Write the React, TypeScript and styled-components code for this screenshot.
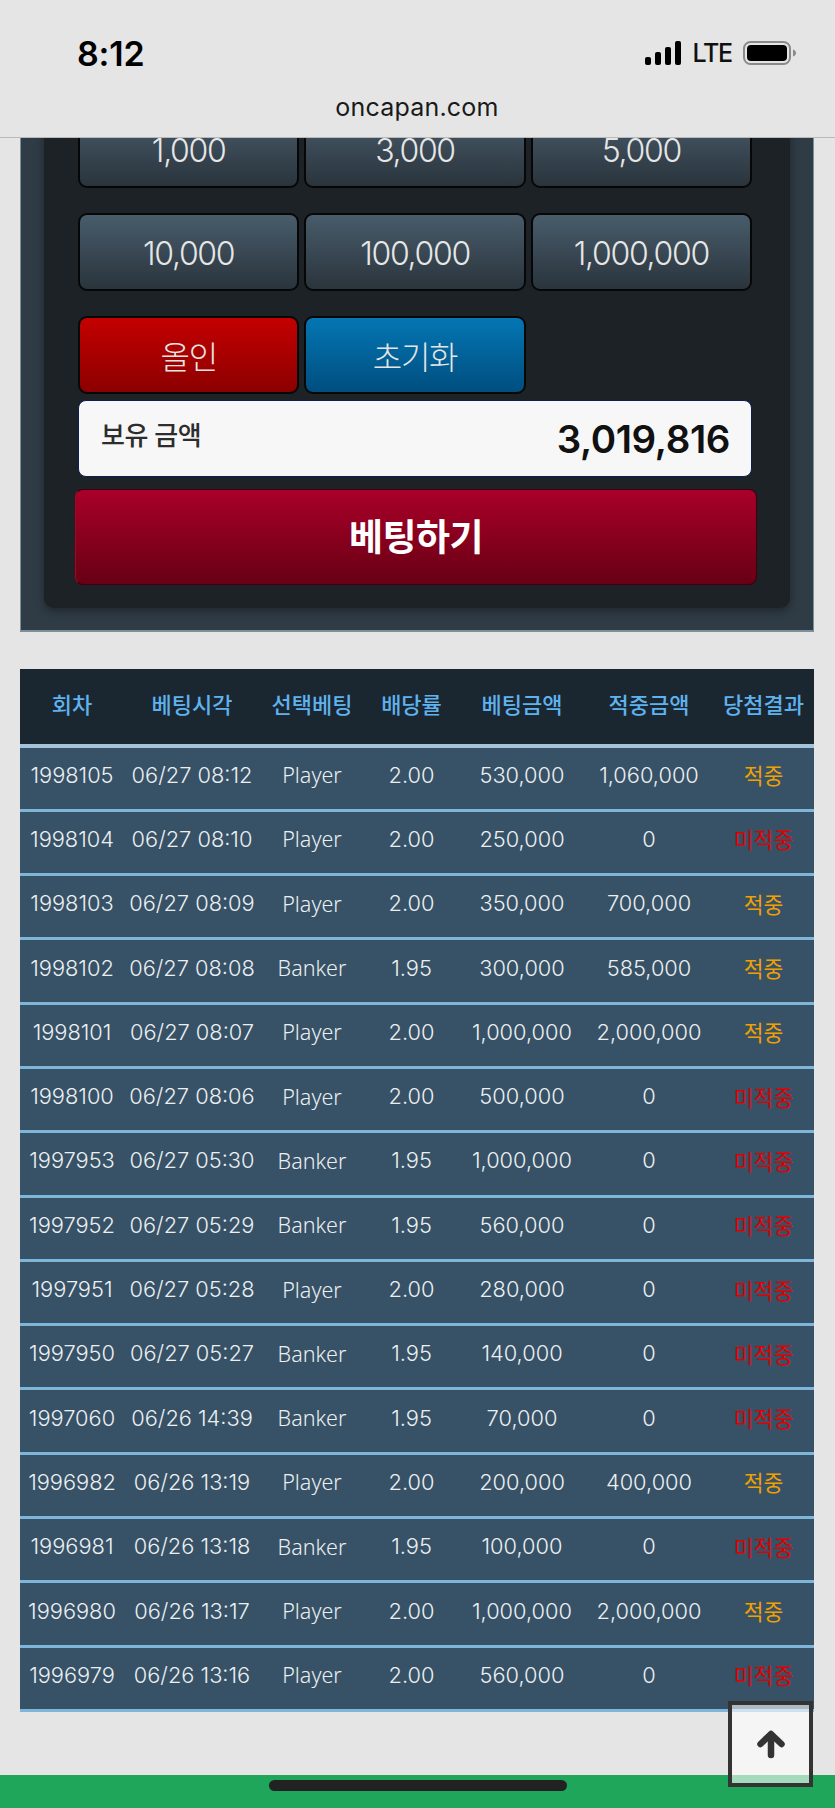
import styled, { createGlobalStyle } from 'styled-components';

const GlobalStyle = createGlobalStyle`
  html, body {
    margin: 0;
    padding: 0;
    background: #e5e5e5;
  }
  * { box-sizing: border-box; }
`;

type BetRow = {
  round: string;
  time: string;
  pick: string;
  odds: string;
  amount: string;
  payout: string;
  win: boolean;
};

const row = (round: string, time: string, pick: string, amount: string, payout: string): BetRow => ({
  round,
  time,
  pick,
  odds: pick === 'Player' ? '2.00' : '1.95',
  amount,
  payout,
  win: payout !== '0',
});

const rows: BetRow[] = [
  row('1998105', '06/27 08:12', 'Player', '530,000', '1,060,000'),
  row('1998104', '06/27 08:10', 'Player', '250,000', '0'),
  row('1998103', '06/27 08:09', 'Player', '350,000', '700,000'),
  row('1998102', '06/27 08:08', 'Banker', '300,000', '585,000'),
  row('1998101', '06/27 08:07', 'Player', '1,000,000', '2,000,000'),
  row('1998100', '06/27 08:06', 'Player', '500,000', '0'),
  row('1997953', '06/27 05:30', 'Banker', '1,000,000', '0'),
  row('1997952', '06/27 05:29', 'Banker', '560,000', '0'),
  row('1997951', '06/27 05:28', 'Player', '280,000', '0'),
  row('1997950', '06/27 05:27', 'Banker', '140,000', '0'),
  row('1997060', '06/26 14:39', 'Banker', '70,000', '0'),
  row('1996982', '06/26 13:19', 'Player', '200,000', '400,000'),
  row('1996981', '06/26 13:18', 'Banker', '100,000', '0'),
  row('1996980', '06/26 13:17', 'Player', '1,000,000', '2,000,000'),
  row('1996979', '06/26 13:16', 'Player', '560,000', '0'),
];

const headers = ['회차', '베팅시각', '선택베팅', '배당률', '베팅금액', '적중금액', '당첨결과'];
const colWidths = [104, 136, 104, 95, 126, 128, 101];
const chips = ['1,000', '3,000', '5,000', '10,000', '100,000', '1,000,000'];

export default function App() {
  return (
    <>
      <GlobalStyle />
      <Page>
        <StatusArea>
          <StatusRow>
            <Clock>8:12</Clock>
            <StatusIcons>
              <svg width="36" height="24" viewBox="0 0 36 24" fill="#000">
                <rect x="0" y="16" width="6" height="8" rx="2" />
                <rect x="10" y="11" width="6" height="13" rx="2" />
                <rect x="20" y="6" width="6" height="18" rx="2" />
                <rect x="30" y="0" width="6" height="24" rx="2" />
              </svg>
              <Lte>LTE</Lte>
              <svg width="53" height="24" viewBox="0 0 53 24">
                <rect x="1" y="1" width="46" height="22" rx="6.5" fill="none" stroke="#8a8a8a" strokeWidth="2" />
                <rect x="4" y="4" width="40" height="16" rx="4" fill="#000" />
                <path d="M50 8.5c1.6.5 3 1.800 3 3.500s-1.400 3-3 3.500z" fill="#8a8a8a" />
              </svg>
            </StatusIcons>
          </StatusRow>
          <Domain>oncapan.com</Domain>
        </StatusArea>

        <Main>
          <OuterPanel>
            <InnerPanel>
              <ChipGrid>
                {chips.map((c) => (
                  <Chip key={c}>{c}</Chip>
                ))}
                <Chip $tone="red">올인</Chip>
                <Chip $tone="blue">초기화</Chip>
              </ChipGrid>
              <Balance>
                <BalanceLabel>보유 금액</BalanceLabel>
                <BalanceValue>3,019,816</BalanceValue>
              </Balance>
              <BetButton>베팅하기</BetButton>
            </InnerPanel>
          </OuterPanel>

          <HistoryTable>
            <colgroup>
              {colWidths.map((w, i) => (
                <col key={i} style={{ width: w }} />
              ))}
            </colgroup>
            <thead>
              <tr>
                {headers.map((h) => (
                  <HeadCell key={h}>{h}</HeadCell>
                ))}
              </tr>
            </thead>
            <tbody>
              {rows.map((r) => (
                <tr key={r.round}>
                  <Cell>{r.round}</Cell>
                  <Cell>{r.time}</Cell>
                  <PickCell>{r.pick}</PickCell>
                  <Cell>{r.odds}</Cell>
                  <Cell>{r.amount}</Cell>
                  <Cell>{r.payout}</Cell>
                  <ResultCell $win={r.win}>{r.win ? '적중' : '미적중'}</ResultCell>
                </tr>
              ))}
            </tbody>
          </HistoryTable>
        </Main>

        <BottomBar>
          <HomeIndicator />
        </BottomBar>

        <TopButton aria-label="top">
          <svg width="30" height="30" viewBox="0 0 30 30" fill="none" stroke="currentColor" strokeWidth="6.5" strokeLinecap="round" strokeLinejoin="round">
            <path d="M4.500 15L15 5l10.500 10" />
            <path d="M15 6v20" />
          </svg>
        </TopButton>
      </Page>
    </>
  );
}

const Page = styled.div`
  position: relative;
  width: 835px;
  height: 1808px;
  display: flex;
  flex-direction: column;
  overflow: hidden;
  background: #e5e5e5;
  font-family: Inter, 'Noto Sans CJK KR', sans-serif;
`;

const StatusArea = styled.header`
  height: 138px;
  flex: none;
  padding: 41px 39px 0 77px;
  border-bottom: 1px solid #b9b9b9;
  background: #e5e5e5;
`;

const StatusRow = styled.div`
  display: flex;
  align-items: center;
  justify-content: space-between;
  height: 24px;
`;

const Clock = styled.div`
  font-size: 34px;
  font-weight: 600;
  letter-spacing: -0.2px;
  color: #000;
`;

const StatusIcons = styled.div`
  display: flex;
  align-items: center;
  gap: 11px;
`;

const Lte = styled.span`
  font-size: 25px;
  font-weight: 500;
  letter-spacing: -1.2px;
  color: #111;
`;

const Domain = styled.div`
  margin: 27px 0 0 -39px;
  text-align: center;
  font-size: 25px;
  line-height: 30px;
  letter-spacing: 0.2px;
  color: #1a1a1a;
`;

const Main = styled.main`
  flex: 1;
  min-height: 0;
  overflow: hidden;
  padding: 0 21px 0 20px;
`;

const OuterPanel = styled.section`
  height: 522px;
  margin-top: -28px;
  padding: 0 23px 22px 23px;
  background: #2f3b45;
  border-right: 1px solid #7c8f9c;
  border-bottom: 2px solid #7c8f9c;
  border-left: 1px solid #7c8f9c;
`;

const InnerPanel = styled.div`
  height: 100%;
  padding: 0 38px 0 34px;
  background: #1c2226;
  border-radius: 0 0 10px 10px;
  box-shadow: 0 3px 8px rgba(0, 0, 0, 0.35);
`;

const ChipGrid = styled.div`
  display: grid;
  grid-template-columns: repeat(3, 1fr);
  gap: 25px 5px;
`;

const toneColors = {
  slate: 'linear-gradient(#485c6b, #2a343c)',
  red: 'linear-gradient(#c40000, #8c0000)',
  blue: 'linear-gradient(#0476b3, #004e7f)',
};

const Chip = styled.button<{ $tone?: keyof typeof toneColors }>`
  height: 78px;
  padding: ${(p) => (p.$tone ? '0' : '2px 0 0')};
  background: ${(p) => toneColors[p.$tone ?? 'slate']};
  border: 2px solid #070707;
  border-radius: 9px;
  color: #e6e6e6;
  font-family: Inter, 'Noto Sans CJK KR', sans-serif;
  font-size: 32px;
  font-weight: 300;
  letter-spacing: -1.3px;
`;

const Balance = styled.div`
  display: flex;
  justify-content: space-between;
  align-items: center;
  height: 77px;
  margin-top: 6px;
  padding: 0 21px 0 22px;
  background: #f7f7f7;
  border: 1px solid #0b1f55;
  border-radius: 8px;
`;

const BalanceLabel = styled.span`
  margin-top: -10px;
  font-size: 26px;
  font-weight: 500;
  letter-spacing: -0.5px;
  color: #2d2d2d;
`;

const BalanceValue = styled.span`
  font-size: 38.5px;
  font-weight: 600;
  letter-spacing: -0.4px;
  color: #111;
`;

const BetButton = styled.button`
  display: block;
  width: 682px;
  height: 96px;
  margin: 12px 0 0 -3px;
  padding: 0 0 4px;
  background: linear-gradient(#aa0029, #670014);
  border: 1px solid #3c0010;
  border-left-color: #b00020;
  border-radius: 8px;
  color: #fff;
  font-family: Inter, 'Noto Sans CJK KR', sans-serif;
  font-size: 37px;
  font-weight: 700;
  letter-spacing: -0.5px;
`;

const HistoryTable = styled.table`
  width: 794px;
  margin-top: 37px;
  border-collapse: collapse;
  table-layout: fixed;
`;

const HeadCell = styled.th`
  height: 77px;
  padding: 0 0 8px;
  background: #1a2630;
  border-bottom: 4px solid #a3c3da;
  color: #5fb2ee;
  font-family: 'Noto Sans CJK KR', sans-serif;
  font-size: 22px;
  font-weight: 500;
  text-align: center;
  white-space: nowrap;
`;

const Cell = styled.td`
  height: 64.3px;
  padding: 0 0 7px;
  background: #375267;
  border-bottom: 3px solid #7fb5d8;
  color: #eceff1;
  font-family: Inter, 'Noto Sans CJK KR', sans-serif;
  font-size: 21.8px;
  font-weight: 300;
  text-align: center;
  white-space: nowrap;
`;

const PickCell = styled(Cell)`
  font-family: 'Noto Sans', sans-serif;
  font-size: 21.5px;
  font-weight: 300;
`;

const ResultCell = styled(Cell)<{ $win: boolean }>`
  color: ${(p) => (p.$win ? '#f0a000' : '#e00000')};
  font-family: 'Noto Sans CJK KR', sans-serif;
  font-size: 21.5px;
  font-weight: 400;
`;

const BottomBar = styled.footer`
  flex: none;
  height: 33px;
  padding-top: 5px;
  background: #1fa65a;
`;

const HomeIndicator = styled.div`
  width: 298px;
  height: 11px;
  margin-left: 269px;
  background: #222;
  border-radius: 6px;
`;

const TopButton = styled.button`
  position: absolute;
  left: 728px;
  top: 1701px;
  display: flex;
  align-items: center;
  justify-content: center;
  width: 85px;
  height: 86px;
  padding: 0;
  background: rgba(255, 255, 255, 0.6);
  border: 4px solid #333;
  color: #333;
`;
